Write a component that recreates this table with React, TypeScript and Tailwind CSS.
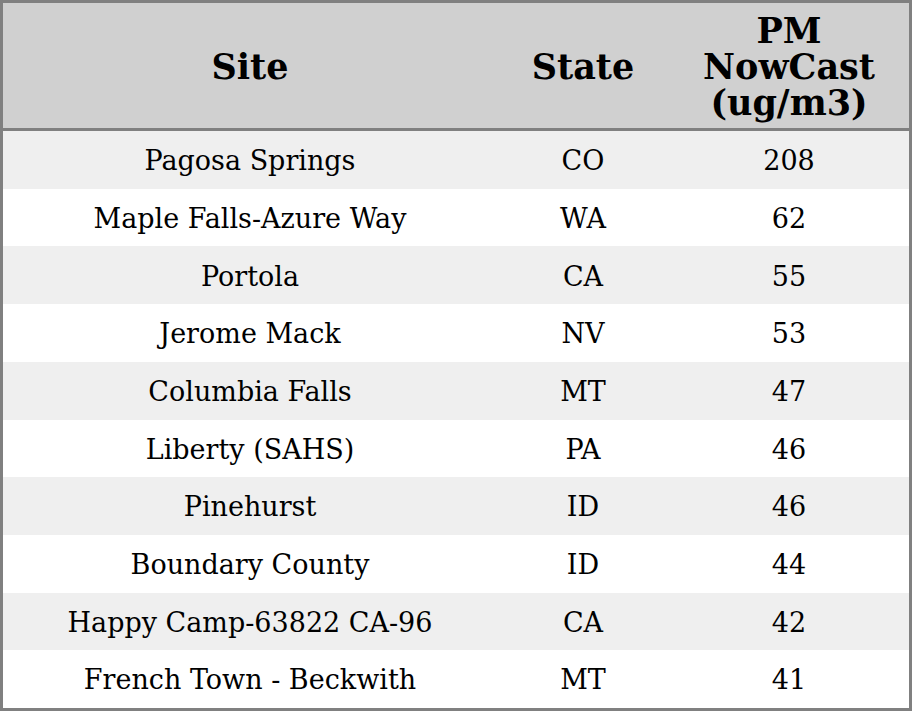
import React from 'react';

const rows = [
  ['Pagosa Springs', 'CO', '208'],
  ['Maple Falls-Azure Way', 'WA', '62'],
  ['Portola', 'CA', '55'],
  ['Jerome Mack', 'NV', '53'],
  ['Columbia Falls', 'MT', '47'],
  ['Liberty (SAHS)', 'PA', '46'],
  ['Pinehurst', 'ID', '46'],
  ['Boundary County', 'ID', '44'],
  ['Happy Camp-63822 CA-96', 'CA', '42'],
  ['French Town - Beckwith', 'MT', '41'],
];

export default function App() {
  return (
    <div className="w-[912px] h-[711px] bg-white font-['DejaVu_Serif',serif] text-black">
      <div className="border-[3px] border-[#808080] w-[912px] h-[711px] flex flex-col">
        <div className="flex h-[125px] shrink-0 bg-[#d0d0d0] border-b-[3px] border-[#808080] box-content font-bold text-[35px] leading-[36px] text-center">
          <div className="w-[494px] pt-[2px] flex items-center justify-center">Site</div>
          <div className="w-[172px] pt-[2px] flex items-center justify-center">State</div>
          <div className="flex-1 pt-[2px] flex items-center justify-center">
            PM
            <br />
            NowCast
            <br />
            (ug/m3)
          </div>
        </div>
        {rows.map((r, i) => (
          <div
            key={i}
            className={
              'flex flex-1 pt-[3px] text-[27px] text-center ' + (i % 2 === 0 ? 'bg-[#efefef]' : 'bg-white')
            }
          >
            <div className="w-[494px] flex items-center justify-center">{r[0]}</div>
            <div className="w-[172px] flex items-center justify-center">{r[1]}</div>
            <div className="flex-1 flex items-center justify-center">{r[2]}</div>
          </div>
        ))}
      </div>
    </div>
  );
}
